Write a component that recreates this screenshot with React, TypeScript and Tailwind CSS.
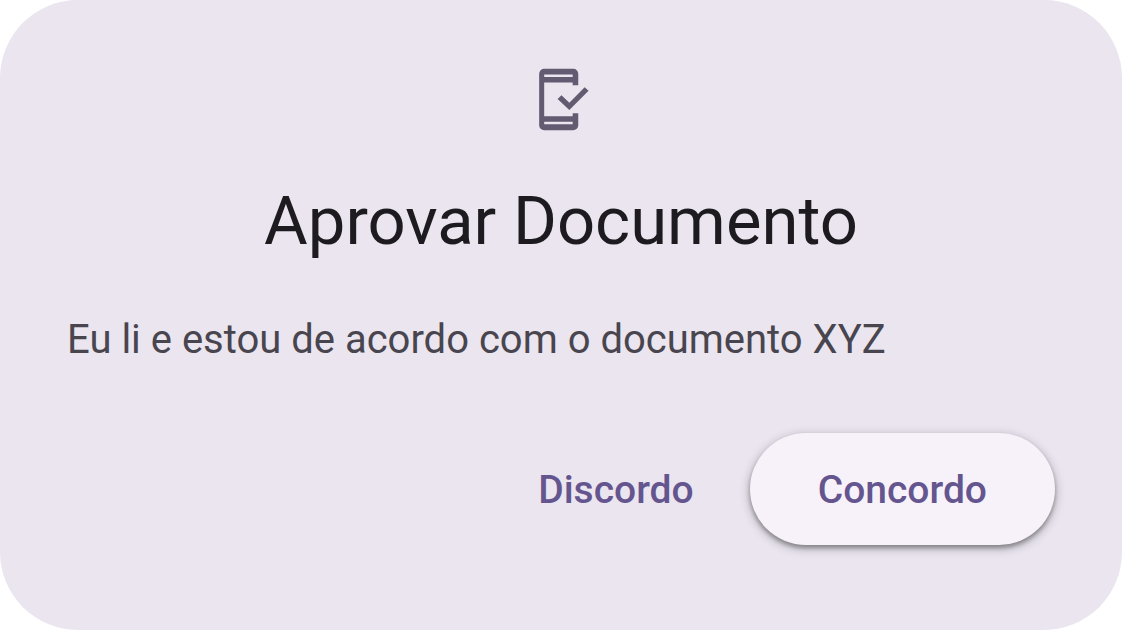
function MobileCheckIcon() {
  return (
    <svg viewBox="0 0 24 24" className="size-[67px] text-[#625b71]" fill="currentColor" aria-hidden="true">
      <path
        fillRule="evenodd"
        d="M5.8 1H16.2A1.8 1.8 0 0 1 18 2.8V6.9H16V5.9H5.8V18H16V16.9H18V21.2A1.8 1.8 0 0 1 16.2 23H5.8A1.8 1.8 0 0 1 4 21.2V2.8A1.8 1.8 0 0 1 5.8 1ZM5.8 3V3.9H16V3ZM5.8 20V20.9H16V20Z"
      />
      <path d="M10.6 11.8 12 10.5 14.8 13.2 20.3 7.6 21.7 8.9 14.8 15.8Z" />
    </svg>
  );
}

export default function App() {
  return (
    <main className="bg-white font-[Roboto,sans-serif]">
      <section
        role="dialog"
        aria-labelledby="dialog-title"
        aria-describedby="dialog-text"
        className="mr-px rounded-[78px] bg-[#eae5ef] px-[67px] pt-[66px] pb-[85px]"
      >
        <div className="flex flex-col items-center gap-11">
          <MobileCheckIcon />
          <h1 id="dialog-title" className="text-center text-[67px] leading-[88px] text-[#1d1b20]">
            Aprovar Documento
          </h1>
        </div>
        <p id="dialog-text" className="mt-[47px] text-[40px] leading-[56px] text-[#49454f]">
          Eu li e estou de acordo com o documento XYZ
        </p>
        <div className="mt-[65px] flex items-center justify-end gap-[22px]">
          <button type="button" className="h-28 rounded-full px-[34px] pt-0.5 text-[39px] font-medium text-[#65558f]">
            Discordo
          </button>
          <button
            type="button"
            className="h-28 rounded-full bg-[#f7f2fa] px-[68px] pt-0.5 text-[39px] font-medium text-[#65558f] shadow-[0_3px_4px_rgba(0,0,0,0.33),0_3px_8px_3px_rgba(0,0,0,0.15)]"
          >
            Concordo
          </button>
        </div>
      </section>
    </main>
  );
}
